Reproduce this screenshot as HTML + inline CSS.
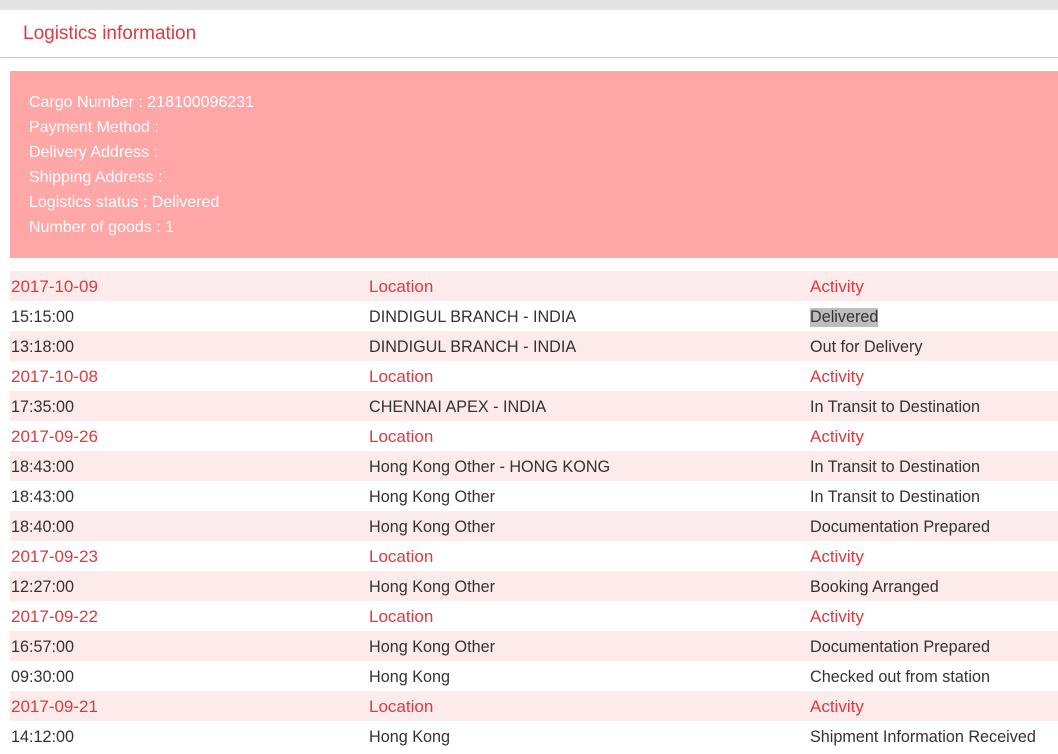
<!DOCTYPE html>
<html><head><meta charset="utf-8"><style>
body{margin:0;width:1058px;height:754px;overflow:hidden;background:#fff;font-family:"Liberation Sans",sans-serif;}
.top{height:10px;background:#e4e4e4;}
.hd{height:47px;border-bottom:1px solid #c8c8c8;position:relative;}
.hd span{position:absolute;left:23px;top:13px;font-size:19px;color:#e0393e;}
.box{position:absolute;left:10px;top:71px;width:1048px;height:187px;background:#ffa6a6;color:#fff;font-size:16px;}
.box div{position:absolute;left:19px;}
.rows{position:absolute;left:10px;top:271px;width:1048px;}
.r{height:30px;position:relative;font-size:16.2px;color:#333;}
.r:nth-child(odd){background:#fdeaea;}
.r span{position:absolute;top:7px;}
.r span:nth-child(1){left:1px}.r span:nth-child(2){left:359px}.r span:nth-child(3){left:800px}
.d{color:#e0393e;font-size:17px;}
.d span{top:6px;}
.hl{background:#bdbdbd;}
</style></head><body>
<div class="top"></div>
<div class="hd"><span>Logistics information</span></div>
<div class="box">
<div style="top:23px">Cargo Number : 218100096231</div>
<div style="top:48px">Payment Method :</div>
<div style="top:73px">Delivery Address :</div>
<div style="top:98px">Shipping Address :</div>
<div style="top:123px">Logistics status : Delivered</div>
<div style="top:148px">Number of goods : 1</div>
</div>
<div class="rows">
<div class="r d"><span>2017-10-09</span><span>Location</span><span>Activity</span></div>
<div class="r"><span>15:15:00</span><span>DINDIGUL BRANCH - INDIA</span><span class="hl">Delivered</span></div>
<div class="r"><span>13:18:00</span><span>DINDIGUL BRANCH - INDIA</span><span>Out for Delivery</span></div>
<div class="r d"><span>2017-10-08</span><span>Location</span><span>Activity</span></div>
<div class="r"><span>17:35:00</span><span>CHENNAI APEX - INDIA</span><span>In Transit to Destination</span></div>
<div class="r d"><span>2017-09-26</span><span>Location</span><span>Activity</span></div>
<div class="r"><span>18:43:00</span><span>Hong Kong Other - HONG KONG</span><span>In Transit to Destination</span></div>
<div class="r"><span>18:43:00</span><span>Hong Kong Other</span><span>In Transit to Destination</span></div>
<div class="r"><span>18:40:00</span><span>Hong Kong Other</span><span>Documentation Prepared</span></div>
<div class="r d"><span>2017-09-23</span><span>Location</span><span>Activity</span></div>
<div class="r"><span>12:27:00</span><span>Hong Kong Other</span><span>Booking Arranged</span></div>
<div class="r d"><span>2017-09-22</span><span>Location</span><span>Activity</span></div>
<div class="r"><span>16:57:00</span><span>Hong Kong Other</span><span>Documentation Prepared</span></div>
<div class="r"><span>09:30:00</span><span>Hong Kong</span><span>Checked out from station</span></div>
<div class="r d"><span>2017-09-21</span><span>Location</span><span>Activity</span></div>
<div class="r"><span>14:12:00</span><span>Hong Kong</span><span>Shipment Information Received</span></div>
</div>
</body></html>
